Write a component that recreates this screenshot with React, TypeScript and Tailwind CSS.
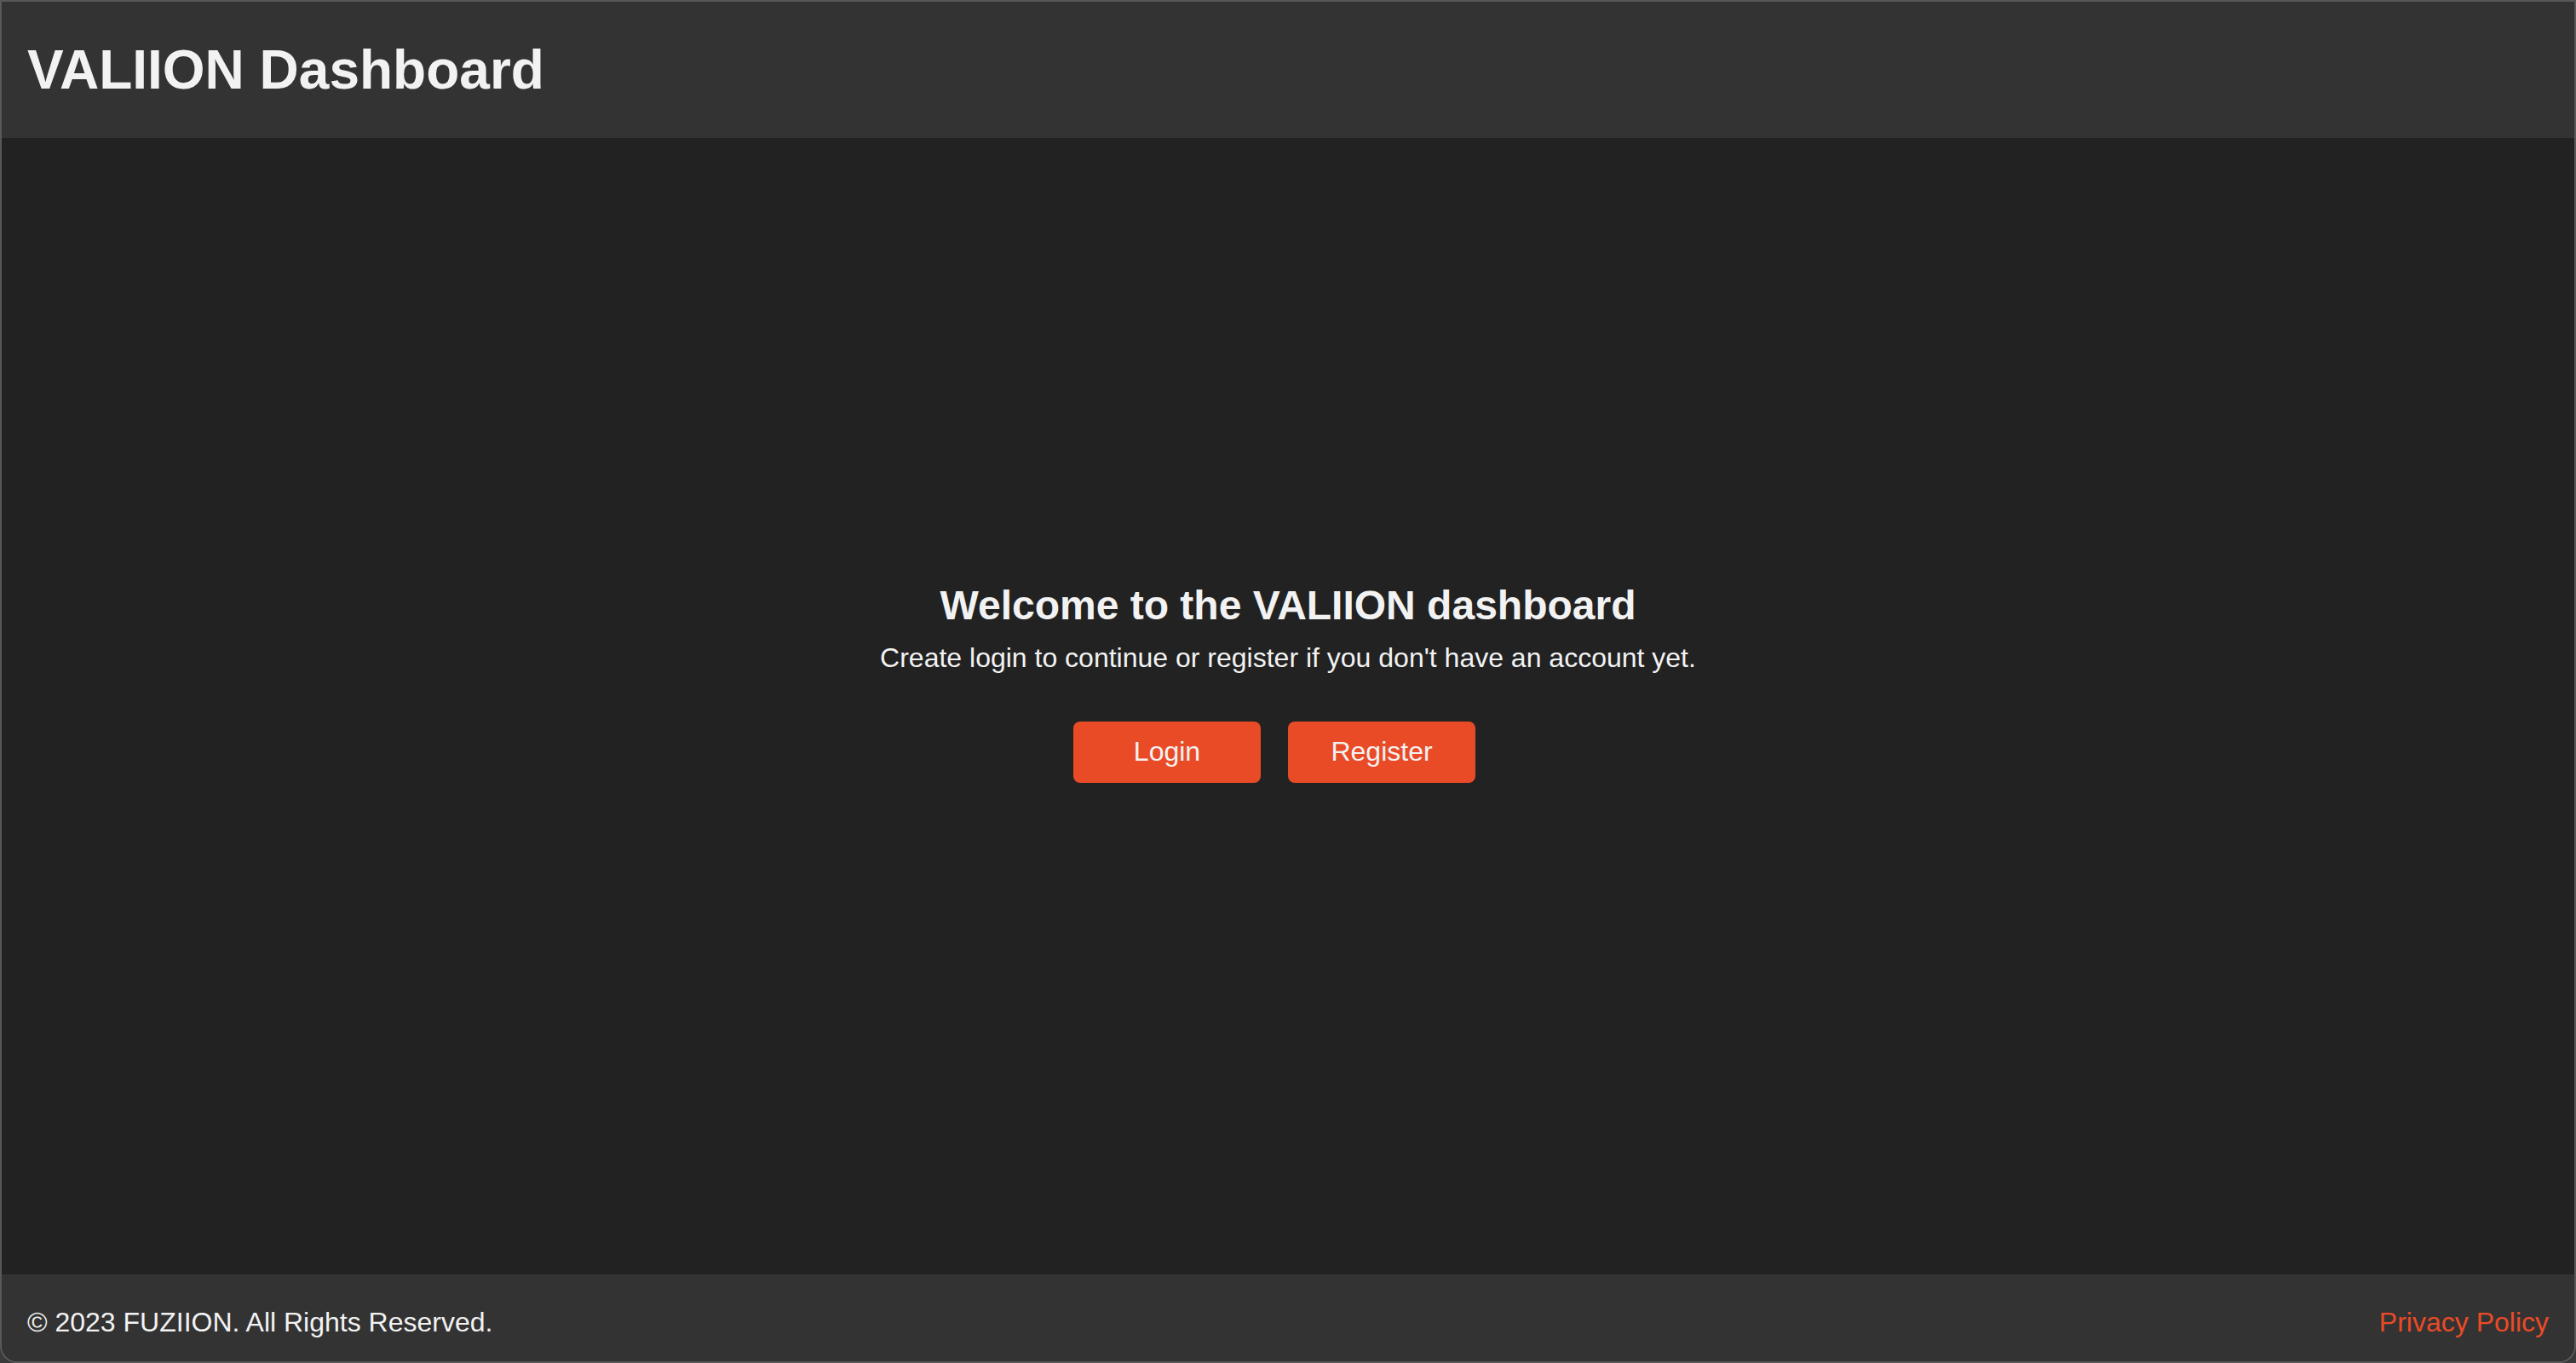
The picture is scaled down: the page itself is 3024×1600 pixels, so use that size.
import React from "react";

export default function App() {
  return (
    <div
      className="h-screen w-full bg-[#3a3a3a]"
      style={{ fontFamily: '"Liberation Sans", Arial, sans-serif' }}
    >
      <div className="h-full w-full flex flex-col border-2 border-[#585858] rounded-b-[20px] overflow-hidden">
        <header className="h-[160px] shrink-0 bg-[#333333] flex items-center px-[30px]">
          <h1 className="text-[64px] font-bold leading-[normal] text-[#f2f2f2]">
            VALIION Dashboard
          </h1>
        </header>
        <main className="flex-1 bg-[#222222] flex flex-col items-center justify-center pb-[57px]">
          <h2 className="text-[48px] font-bold leading-[normal] text-[#f2f2f2]">
            Welcome to the VALIION dashboard
          </h2>
          <p className="mt-[16px] text-[32px] leading-[normal] text-[#f2f2f2]">
            Create login to continue or register if you don't have an account yet.
          </p>
          <div className="mt-[56px] flex">
            <button className="mr-[32px] w-[220px] h-[72px] rounded-[8px] bg-[#ea4b27] text-[32px] leading-[normal] text-[#f2f2f2]">
              Login
            </button>
            <button className="mr-[32px] w-[220px] h-[72px] rounded-[8px] bg-[#ea4b27] text-[32px] leading-[normal] text-[#f2f2f2]">
              Register
            </button>
          </div>
        </main>
        <footer className="h-[102px] shrink-0 bg-[#333333] flex items-center justify-between px-[30px] pt-[11px] text-[32px] leading-[normal]">
          <span className="text-[#f2f2f2]">© 2023 FUZIION. All Rights Reserved.</span>
          <a className="text-[#ea4b27]">Privacy Policy</a>
        </footer>
      </div>
    </div>
  );
}
